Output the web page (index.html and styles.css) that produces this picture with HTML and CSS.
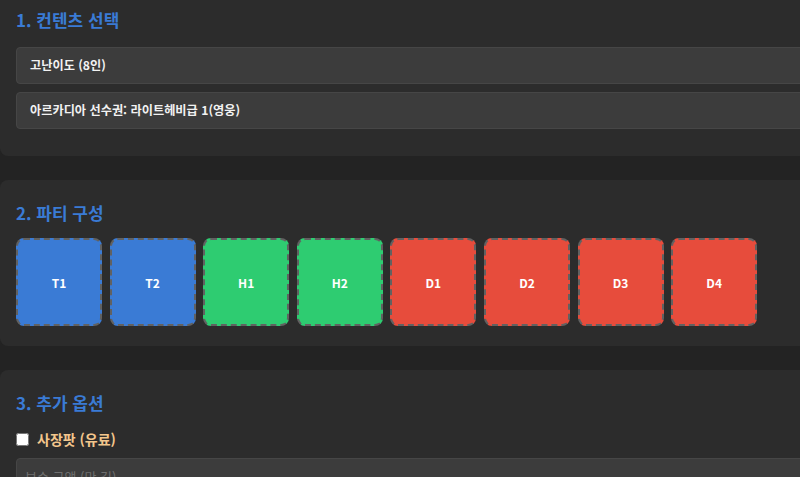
FILE: index.html
```html
<!DOCTYPE html>
<html lang="ko">
<head>
  <meta charset="UTF-8">
  <meta name="viewport" content="width=device-width, initial-scale=1.0">
  <title>파티 구성</title>
  <link rel="stylesheet" href="styles.css">
</head>
<body>
  <div id="page-wrapper">
    <div class="section section-first">
      <h2>1. 컨텐츠 선택</h2>
      <div class="select-box">고난이도 (8인)</div>
      <div class="select-box">아르카디아 선수권: 라이트헤비급 1(영웅)</div>
    </div>

    <div class="section">
      <h2>2. 파티 구성</h2>
      <div class="party">
        <div class="slot tank">T1</div>
        <div class="slot tank">T2</div>
        <div class="slot healer">H1</div>
        <div class="slot healer">H2</div>
        <div class="slot dps">D1</div>
        <div class="slot dps">D2</div>
        <div class="slot dps">D3</div>
        <div class="slot dps">D4</div>
      </div>
    </div>

    <div class="section">
      <h2>3. 추가 옵션</h2>
      <label class="option">
        <input type="checkbox">
        <span>사장팟 (유료)</span>
      </label>
      <input class="text-input" type="text" placeholder="보수 금액 (만 길)">
    </div>
  </div>
</body>
</html>
```

FILE: styles.css
```css
html, body {
  overflow: hidden;
}
body {
  font-family: "Noto Sans CJK KR", "Noto Sans", sans-serif;
  margin: 0;
  padding: 0;
  background-color: #232323;
  color: #eee;
}
#page-wrapper {
  width: 840px;
}
.section {
  background-color: #2c2c2c;
  border-radius: 8px;
  padding: 20px 16px;
  margin-bottom: 24px;
}
.section-first {
  margin-top: -13px;
  padding-bottom: 19px;
}
h2 {
  color: #3a7bd5;
  font-size: 17px;
  font-weight: 700;
  line-height: 26px;
  margin: 0 0 12px 0;
}
.section-first h2 {
  margin-bottom: 14px;
}
.select-box {
  background-color: #3c3c3c;
  border: 1px solid #464646;
  border-radius: 4px;
  height: 35px;
  line-height: 35px;
  padding: 0 13px;
  margin-bottom: 8px;
  font-size: 12.2px;
  font-weight: 700;
  color: #f2f2f2;
}
.party {
  display: flex;
  gap: 7.6px;
}
.slot {
  width: 82px;
  height: 84px;
  border: 2px dashed #616161;
  border-radius: 8px;
  display: flex;
  align-items: center;
  justify-content: center;
  font-size: 12px;
  font-weight: 700;
  color: #fff;
}
.tank {
  background-color: #3a7bd5;
}
.healer {
  background-color: #2ecc71;
}
.dps {
  background-color: #e74c3c;
}
.option {
  display: flex;
  align-items: center;
  gap: 8px;
  margin-top: 13px;
  font-size: 14px;
  font-weight: 700;
  color: #f3c68c;
}
.option input {
  width: 13px;
  height: 13px;
  margin: 0;
}
.text-input {
  display: block;
  box-sizing: border-box;
  width: 100%;
  height: 36px;
  margin-top: 9px;
  padding: 0 8px;
  background-color: #3c3c3c;
  border: 1px solid #464646;
  border-radius: 4px;
  font-family: inherit;
  font-size: 13px;
  color: #eee;
}
.text-input::placeholder {
  color: #6e6e6e;
}
```
